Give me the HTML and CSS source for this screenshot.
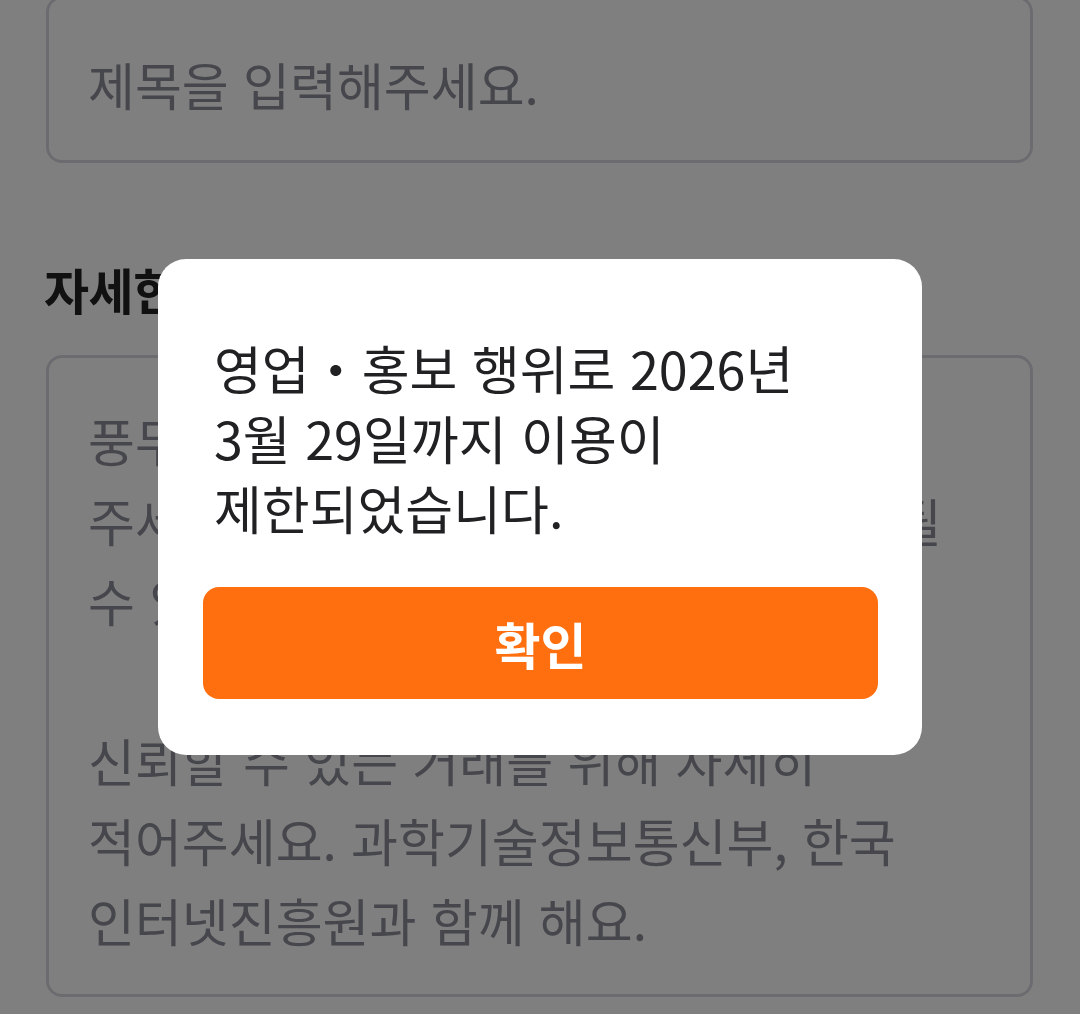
FILE: index.html
```html
<!DOCTYPE html>
<html lang="ko">
<head>
<meta charset="utf-8">
<title>게시글 작성</title>
<link rel="stylesheet" href="styles.css">
</head>
<body>
<main class="form">
  <div class="field title-field">
    <span class="placeholder">제목을 입력해주세요.</span>
  </div>
  <section class="desc">
    <h2 class="label">자세한 설명</h2>
    <div class="field desc-field">
      <p class="placeholder">풍무동에 올릴 게시글 내용을 작성해<br>주세요. (판매 금지 물품은 게시가 제한될<br>수 있어요.)<br><br>신뢰할 수 있는 거래를 위해 자세히<br>적어주세요. 과학기술정보통신부, 한국<br>인터넷진흥원과 함께 해요.</p>
    </div>
  </section>
</main>
<div class="overlay">
  <div class="dialog">
    <p class="dialog-text">영업・홍보 행위로 2026년<br>3월 29일까지 이용이<br>제한되었습니다.</p>
    <button class="confirm" type="button">확인</button>
  </div>
</div>
</body>
</html>
```

FILE: styles.css
```css
* {
  box-sizing: border-box;
}

html, body {
  margin: 0;
  padding: 0;
  height: 100%;
  overflow: hidden;
}

body {
  background: #ffffff;
  font-family: "Noto Sans CJK KR", "Noto Sans", sans-serif;
  color: #212124;
}

.form {
  padding: 0 47px 0 46px;
}

.field {
  border: 3px solid #d8d9e0;
  border-radius: 16px;
}

.title-field {
  margin-top: -4px;
  height: 167px;
  display: flex;
  align-items: center;
  padding: 8px 0 0 39px;
}

.placeholder {
  margin: 0;
  font-size: 51px;
  color: #8c8e98;
}

.title-field .placeholder {
  line-height: 64px;
}

.label {
  margin: 96px 0 36px -2px;
  font-size: 49px;
  line-height: 60px;
  font-weight: 700;
  color: #222222;
  letter-spacing: -0.5px;
}

.desc-field {
  padding: 42px 20px 34px 39px;
}

.desc-field .placeholder {
  line-height: 80px;
  white-space: nowrap;
  overflow: hidden;
}

.overlay {
  position: fixed;
  inset: 0;
  background: rgba(0, 0, 0, 0.5);
  display: flex;
  align-items: center;
  justify-content: center;
}

.dialog {
  width: 764px;
  background: #ffffff;
  border-radius: 28px;
  padding: 74px 44px 56px 45px;
}

.dialog-text {
  margin: 0 0 44px;
  padding: 0 11px;
  font-size: 52px;
  line-height: 70px;
  color: #212124;
}

.confirm {
  display: block;
  width: 100%;
  height: 112px;
  border: 0;
  border-radius: 16px;
  background: #ff6f0f;
  color: #ffffff;
  font-family: "Noto Sans CJK KR", "Noto Sans", sans-serif;
  font-size: 50px;
  font-weight: 700;
  cursor: pointer;
}
```
